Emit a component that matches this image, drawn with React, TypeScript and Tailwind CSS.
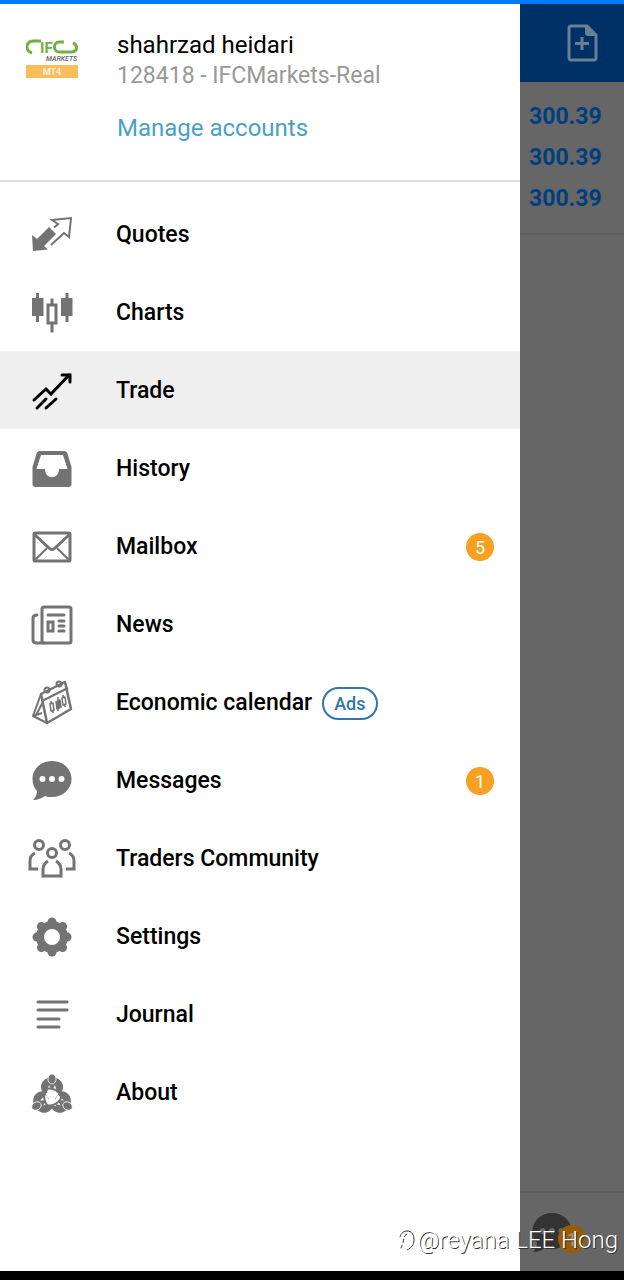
import { useState } from 'react';
import type { ReactNode } from 'react';

interface MenuItem {
  label: string;
  icon: ReactNode;
  count?: number;
  tag?: string;
}

const petals = [0, 45, 90, 135, 180, 225, 270, 315];
const figures = [0, 120, 240];

const QuotesIcon = () => (
  <>
    <path d="M4 24l5 4 12-12 7 7-12 12 4 3.500L5 40z" fill="currentColor" />
    <path d="M23 34l13-12 5 4 2-19-19 2 6 4-4 3.500" fill="none" stroke="currentColor" strokeWidth="2" />
  </>
);

const ChartsIcon = () => (
  <>
    <path d="M4 9h11.500v18H4zM33 9h11.500v18H33z" fill="currentColor" />
    <path d="M9.500 4v29M39 4v29M24 9.500V16M24 34v9.500" stroke="currentColor" strokeWidth="3" />
    <rect x="20" y="16" width="8" height="18" fill="none" stroke="currentColor" strokeWidth="3" />
  </>
);

const TradeIcon = () => (
  <g fill="none" stroke="black" strokeWidth="3" strokeLinecap="round">
    <path d="M6 33l12-11 5 5L41 8" />
    <path d="M34 8h8v7" />
    <path d="M9 41l9-9M18 41l10-9" />
  </g>
);

const HistoryIcon = () => (
  <path
    fillRule="evenodd"
    fill="currentColor"
    d="M12 6h24c2 0 3 1 3.500 2.500L43.500 22v17c0 2-1 3-3 3h-33c-2 0-3-1-3-3V22L8.500 8.500C9 7 10 6 12 6zM13 10L8.500 24H17c0 11 14 11 14 0h8.500L35 10z"
  />
);

const MailIcon = () => (
  <g fill="none" stroke="currentColor" strokeWidth="3">
    <rect x="6" y="10" width="36" height="28" rx="1" />
    <path d="M6 11l15 14c2 2 4 2 6 0l15-14" />
    <path d="M6 38l13-13M42 38L29 25" strokeWidth="2" />
  </g>
);

const NewsIcon = () => (
  <g fill="none" stroke="currentColor" strokeWidth="3" strokeLinecap="round">
    <rect x="14" y="6" width="29" height="36" rx="2" />
    <path d="M9 14c-3 0-4 1-4 3v22c0 2 1 3 4 3h7M20 14h16" />
    <rect x="20" y="21" width="5" height="9" />
    <path d="M31 20h5M31 25h5M31 30h5" />
  </g>
);

const CalendarIcon = () => (
  <g fill="none" stroke="currentColor" strokeWidth="2" strokeLinejoin="round">
    <path d="M13 15l24-12 6 27-24 14z" strokeWidth="2.500" />
    <path d="M14 22l26-13M13 15L5 37l14 7M5 37l9-3M15 23L8 36" />
    <circle cx="19" cy="11" r="2.500" />
    <circle cx="31" cy="5" r="2.500" />
    <path d="M22 25l3-1 1 7-3 1zM34 19l3-1 1 7-3 1zM23 22v3M25 31v3M35 16v3M37 25v3" strokeWidth="1.500" />
    <path d="M28 23l4-2 1 7-4 2zM30 18v14" fill="currentColor" strokeWidth="1.500" />
  </g>
);

const MessageIcon = ({ dots = 'white' }: { dots?: string }) => (
  <>
    <path
      d="M24 4c11 0 19.500 8 19.500 18S35 40 24 40c-3 0-5 0-7-1-3 2-7 4-12 4 3-3 4-6 4-9-3-3-4.500-7-4.500-12C4.500 12 13 4 24 4z"
      fill="currentColor"
    />
    <g fill={dots}>
      <circle cx="14.500" cy="22" r="3" />
      <circle cx="24" cy="22" r="3" />
      <circle cx="33.500" cy="22" r="3" />
    </g>
  </>
);

const CommunityIcon = () => (
  <g fill="none" stroke="currentColor" strokeWidth="3">
    <circle cx="11" cy="10" r="4.500" />
    <circle cx="37" cy="10" r="4.500" />
    <circle cx="24" cy="18" r="4.500" />
    <path d="M20 26c-3 2-5 4-5 8v7h18v-7c0-4-2-6-5-8" />
    <path d="M7 18c-4 2-5 4-5 8v8h8M41 18c4 2 5 4 5 8v8h-8" />
  </g>
);

const SettingsIcon = () => (
  <>
    <circle cx="24" cy="24" r="12" fill="none" stroke="currentColor" strokeWidth="8" />
    {petals.map((angle) => (
      <circle key={angle} cx="24" cy="9" r="4.500" fill="currentColor" transform={`rotate(${angle} 24 24)`} />
    ))}
  </>
);

const JournalIcon = () => (
  <path
    d="M10 11h29M10 19h29M10 28h21M10 36h21"
    stroke="currentColor"
    strokeWidth="3"
    strokeLinecap="round"
  />
);

const AboutIcon = () => (
  <>
    {figures.map((angle) => (
      <g key={angle} transform={`rotate(${angle} 24 28)`}>
        <ellipse cx="24" cy="18" rx="11" ry="10" fill="currentColor" />
        <path d="M21 16l2 4h2l2-4 2 8H19z" fill="white" />
        <ellipse cx="24" cy="10" rx="4" ry="5" fill="currentColor" stroke="white" strokeWidth="0.800" />
      </g>
    ))}
    <path d="M17 24h14l-4 6 1 7h-8l1-7z" fill="white" />
    {figures.map((angle) => (
      <path
        key={angle}
        d="M16 21c6-3 14-1 17 6"
        fill="none"
        stroke="currentColor"
        strokeWidth="2"
        transform={`rotate(${angle} 24 28)`}
      />
    ))}
  </>
);

const items: MenuItem[] = [
  { label: 'Quotes', icon: <QuotesIcon /> },
  { label: 'Charts', icon: <ChartsIcon /> },
  { label: 'Trade', icon: <TradeIcon /> },
  { label: 'History', icon: <HistoryIcon /> },
  { label: 'Mailbox', icon: <MailIcon />, count: 5 },
  { label: 'News', icon: <NewsIcon /> },
  { label: 'Economic calendar', icon: <CalendarIcon />, tag: 'Ads' },
  { label: 'Messages', icon: <MessageIcon />, count: 1 },
  { label: 'Traders Community', icon: <CommunityIcon /> },
  { label: 'Settings', icon: <SettingsIcon /> },
  { label: 'Journal', icon: <JournalIcon /> },
  { label: 'About', icon: <AboutIcon /> },
];

function BrokerLogo() {
  return (
    <svg viewBox="0 0 52 40" className="h-10 w-13 shrink-0" role="img" aria-label="IFC Markets MT4">
      <g fill="none" stroke="#72b043" strokeWidth="3">
        <path d="M15 3H8C-1 3-1 13 6 15" />
        <path d="M38 4h-5c-6 0-6 10 0 10h12c7 0 7-7 2-9" />
      </g>
      <text x="14" y="15" fontSize="15" fontWeight="700" fill="#72b043">IF</text>
      <text x="20" y="23" fontSize="7" fontWeight="500" fontStyle="italic" fill="#666666">MARKETS</text>
      <rect y="27" width="52" height="13" fill="#fbbd5c" />
      <text x="26" y="37" fontSize="9" fontWeight="700" textAnchor="middle" fill="#fff3dd">MT4</text>
    </svg>
  );
}

export default function App() {
  const [active, setActive] = useState('Trade');

  return (
    <div className="relative flex min-h-screen flex-col border-t-4 border-[#007bff] bg-white font-['Roboto',sans-serif]">
      <div className="flex flex-1">
        <aside className="flex w-5/6 flex-col bg-white">
          <header className="flex h-[178px] gap-[39px] border-b-2 border-[#dcdcdc] pt-[26px] pl-[26px]">
            <div className="pt-2">
              <BrokerLogo />
            </div>
            <div>
              <h1 className="text-[24px] leading-[30px] text-black">shahrzad heidari</h1>
              <p className="text-[23px] leading-8 text-[#999999]">128418 - IFCMarkets-Real</p>
              <a href="#accounts" className="mt-5 block text-[24px] leading-8 text-[#4a9fcb]">
                Manage accounts
              </a>
            </div>
          </header>

          <nav className="py-[13px]">
            {items.map((item) => (
              <button
                key={item.label}
                type="button"
                onClick={() => setActive(item.label)}
                className={`flex h-[78px] w-full items-center pt-[2px] pr-[26px] pl-7 text-left ${
                  active === item.label ? 'bg-[#efefef]' : 'bg-white'
                }`}
              >
                <svg viewBox="0 0 48 48" className="size-12 shrink-0 text-[#737373]" aria-hidden="true">
                  {item.icon}
                </svg>
                <span className="ml-10 text-[23px] leading-9 font-medium text-black">{item.label}</span>
                {item.tag && (
                  <span className="ml-[10px] rounded-full border-2 border-[#2f75b0] px-[10px] text-[18px] leading-[29px] font-medium text-[#2f75b0]">
                    {item.tag}
                  </span>
                )}
                {item.count && (
                  <span className="ml-auto flex size-7 items-center justify-center rounded-full bg-[#f7a021] text-[18px] text-white">
                    {item.count}
                  </span>
                )}
              </button>
            ))}
          </nav>
        </aside>

        <main className="flex flex-1 flex-col bg-[#666666]">
          <div className="flex h-[78px] items-center justify-end bg-[#003166] pr-[26px]">
            <button type="button" aria-label="New order">
              <svg viewBox="0 0 32 40" className="h-10 w-8 text-[#6a7f95]" aria-hidden="true">
                <path
                  d="M5 3h16l9 9v23c0 1-1 2-2 2H5c-1 0-2-1-2-2V5c0-1 1-2 2-2zM16 14v13M9 20.500h14"
                  fill="none"
                  stroke="currentColor"
                  strokeWidth="3"
                />
                <path d="M19 2v8c0 2 1 3 3 3h8z" fill="currentColor" />
              </svg>
            </button>
          </div>
          <ul className="border-b-2 border-[#5c5c5c] py-[14px] pl-[9px] text-[23px] leading-[41px] font-bold text-[#003f7f]">
            <li>300.39</li>
            <li>300.39</li>
            <li>300.39</li>
          </ul>
          <div className="mt-auto h-20 border-t-2 border-[#5a5a5a] pt-4 pl-2">
            <button type="button" aria-label="Messages" className="relative block">
              <svg viewBox="0 0 48 48" className="size-12 text-[#333333]" aria-hidden="true">
                <MessageIcon dots="#666666" />
              </svg>
              <span className="absolute top-4 left-[30px] flex size-7 items-center justify-center rounded-full bg-[#965c06] text-[18px] text-[#999999]">
                1
              </span>
            </button>
          </div>
        </main>
      </div>
      <div className="h-[9px] bg-black" />

      <div className="absolute right-[6px] bottom-6 flex items-center text-[24px] leading-8 font-light text-white [text-shadow:1px_1px_0_#333333]">
        <svg viewBox="0 0 20 24" className="h-6 w-5" aria-hidden="true">
          <path d="M3 9c1-4 4-6 7-6 5 0 7 4 7 9s-3 8-7 10" fill="none" stroke="#333333" />
          <path d="M10 6c-4 2-3 6-4 9s-2 4-2 6" fill="none" stroke="#333333" strokeDasharray="4 2" />
        </svg>
        <span>@reyana LEE Hong</span>
      </div>
    </div>
  );
}
